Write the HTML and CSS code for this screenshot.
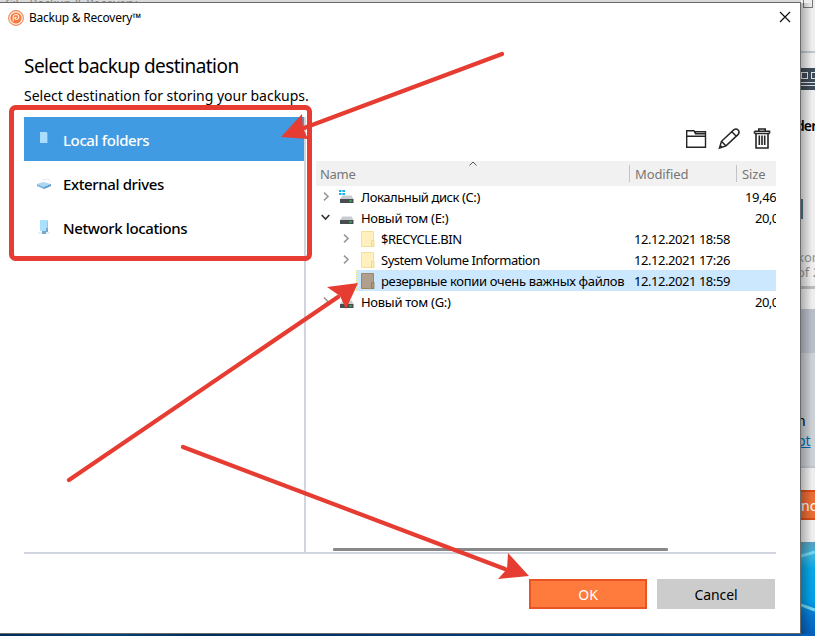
FILE: index.html
```
<!DOCTYPE html>
<html lang="en">
<head>
<meta charset="utf-8">
<title>Backup &amp; Recovery</title>
<link rel="stylesheet" href="styles.css">
</head>
<body>
<div class="desktop">
  <div class="owner-title">C:\ &nbsp; Backup &amp; Recovery</div>
  <aside class="owner">
    <div class="owner-caption"><i class="maximize"></i></div>
    <div class="owner-head">
      <div class="owner-banner"><i></i><i></i></div>
      <div class="owner-heading">der</div>
      <div class="owner-tab"></div>
      <div class="owner-note">kom<br>of 2</div>
    </div>
    <div class="owner-band"></div>
    <div class="owner-body">n<br><a>pt</a></div>
    <div class="owner-foot"><div class="owner-button">nc</div></div>
    <svg class="wallpaper" viewBox="0 0 14 94" preserveAspectRatio="none">
      <defs><linearGradient id="sky" x2="0" y2="1"><stop offset="0" stop-color="#579fbd"/><stop offset=".15" stop-color="#38b4de"/><stop offset=".28" stop-color="#08a7e7"/><stop offset=".62" stop-color="#02a0e8"/><stop offset=".78" stop-color="#0876d0"/><stop offset="1" stop-color="#0560bd"/></linearGradient></defs>
      <rect width="14" height="94" fill="url(#sky)"/>
      <path d="M0 14 14 10M0 63 14 68" stroke="#73d5ef" stroke-width="3"/>
    </svg>
  </aside>
  <div class="shade"></div>
  <div class="taskline"></div>

  <main class="dialog">
    <header class="titlebar">
      <svg class="logo" viewBox="0 0 16 16"><circle cx="8" cy="8" r="7.4" fill="#fff3ea" stroke="#ee8a58" stroke-width="1.1"/><circle cx="8" cy="8" r="5.600" fill="#f47b3d"/><path d="M5.200 11.500V7.200Q5.400 4.500 8 4.500q2.700.1 2.800 2.500Q10.700 9.400 8 9.500L6.800 8.200 8.400 7" fill="none" stroke="#ffe8d9" stroke-width="1.200"/></svg>
      <span class="app-name">Backup &amp; Recovery™</span>
      <svg class="close" viewBox="0 0 12 12"><path d="M1 1 11 11M11 1 1 11" stroke="#111" stroke-width="1.2"/></svg>
    </header>
    <section class="intro">
      <h1>Select backup destination</h1>
      <p>Select destination for storing your backups.</p>
    </section>
    <div class="content">
      <nav class="places">
        <div class="place active"><svg viewBox="0 0 16 16"><path d="M4 2h7v11H4z" fill="#aadcfd"/><path d="M11 3h1v10h-1z" fill="#69b5ec"/></svg><span>Local folders</span></div>
        <div class="place"><svg class="low" viewBox="0 0 16 16"><path d="M1 8 7 6l8 2-7 3z" fill="#add8f2"/><path d="m1 8 7 3v2L1 10z" fill="#78b3dc"/><path d="m8 11 7-3v2l-7 3z" fill="#5798cb"/><path d="M6 3.500h6q3 0 2 3" fill="none" stroke="#e4e9ed" stroke-width=".8"/></svg><span>External drives</span></div>
        <div class="place"><svg class="low" viewBox="0 0 16 16"><path d="M4 0h8v11H4z" fill="#ace0ff"/><path d="M11 1h1v8h-1z" fill="#91cbee"/><path d="M2 13h12" stroke="#d5dfe6"/><path d="M6 11h4v3H6zM10 8h2v4h-2z" fill="#76a9ca"/></svg><span>Network locations</span></div>
      </nav>
      <section class="browser">
        <div class="toolbar">
          <svg class="tool" viewBox="0 0 24 24"><path d="M2.700 20.300V3.700h7.300l1.500 3H21.500v13.600zM2.700 9.200h18.800M11.500 6.700V4.700h10v3" fill="none" stroke="#252525" stroke-width="1.4"/></svg>
          <svg class="tool" viewBox="0 0 24 24"><path d="m2.5 21 2-6.7L16.7 2.9q2.5-1.8 4.4.2t.1 4.3L9 18.9zM4.5 14.3l4.5 4.6M14.8 4.7l4.5 4.5M2.5 21l2-2.3" fill="none" stroke="#252525" stroke-width="1.5"/></svg>
          <svg class="tool" viewBox="0 0 24 24"><path d="M4.5 6.5h15M4.5 4.3h15v2.2M4.5 6.5V4.3M8.8 4V2h6.4v2M6 7v14h12V7M9.3 8.5v9.5M12 8.5v9.5M14.7 8.5v9.5" fill="none" stroke="#252525" stroke-width="1.6"/></svg>
        </div>
        <div class="columns">
          <span class="col-name">Name<svg class="sort" viewBox="0 0 8 5"><path d="M.5 4.5 4 1l3.5 3.5" fill="none" stroke="#555"/></svg></span>
          <span class="col-date">Modified</span><span class="col-size">Size</span>
        </div>
        <div class="row"><svg class="chev" viewBox="0 0 9 9"><path d="m3 .7 4 3.8-4 3.8" /></svg><svg class="drive" viewBox="0 0 16 16"><use href="#disk"/><path d="M0 1h2.500v2H0zM3.300 1H6v2H3.300zM0 4h2.500v2H0zM3.300 4H6v2H3.300z" fill="#10b4ed"/></svg><span class="name n-c">Локальный диск (C:)</span><span class="date"></span><span class="size wide">19,46</span></div>
        <div class="row"><svg class="chev open" viewBox="0 0 9 9"><path d="M.7 2 4.500 6 8.300 2"/></svg><svg class="drive" viewBox="0 0 16 16"><g id="disk"><path d="M3.500 6.500h9L14.500 10H1z" fill="#c9cccf"/><path d="M1 10h13.500v4H1z" fill="#4a4d50"/><path d="M10.500 12h2" stroke="#35e560" stroke-width="1.300"/></g></svg><span class="name n-e">Новый том (E:)</span><span class="date"></span><span class="size">20,0</span></div>
        <div class="row child"><svg class="chev" viewBox="0 0 9 9"><path d="m3 .7 4 3.8-4 3.8" /></svg><svg class="folder" viewBox="0 0 14 16"><use href="#folder"/></svg><span class="name n-r">$RECYCLE.BIN</span><span class="date">12.12.2021 18:58</span><span class="size"></span></div>
        <div class="row child"><svg class="chev" viewBox="0 0 9 9"><path d="m3 .7 4 3.8-4 3.8" /></svg><svg class="folder" viewBox="0 0 14 16"><g id="folder"><path d="M.5.500h12v15H.500z" fill="#fff0bd" stroke="#f3dfa2"/><path d="M10.500 9.500h2.500v6h-2.500z" fill="#ffedaf" stroke="#ecd58c" stroke-width=".8"/></g></svg><span class="name n-s">System Volume Information</span><span class="date">12.12.2021 17:26</span><span class="size"></span></div>
        <div class="row child selected"><svg class="folder" viewBox="0 0 14 16"><path d="M.5.500h12v15H.500z" fill="#b19f8d" stroke="#a28660"/><path d="M10.500 9.500h2.500v6h-2.500z" fill="#b09a7d" stroke="#927343" stroke-width=".8"/></svg><span class="name n-b">резервные копии очень важных файлов</span><span class="date">12.12.2021 18:59</span><span class="size"></span></div>
        <div class="row"><svg class="chev" viewBox="0 0 9 9"><path d="m3 .7 4 3.8-4 3.8" /></svg><svg class="drive" viewBox="0 0 16 16"><use href="#disk"/></svg><span class="name n-e">Новый том (G:)</span><span class="date"></span><span class="size">20,0</span></div>
        <div class="scroll"></div>
      </section>
    </div>
    <footer class="actions"><button class="ok">OK</button><button class="cancel">Cancel</button></footer>
  </main>

  <svg class="annotations" viewBox="0 0 815 636">
    <rect x="11.500" y="107.500" width="298" height="151" rx="4"/>
    <path d="M502 54 304 128M69 480 338 297M183 447 505 569"/>
    <path class="head" d="M281 137 302 114 303 128 308 139ZM358 283 346 309 340 296 327 287ZM529 576 498 579 507 569 508 553Z"/>
  </svg>
</div>
</body>
</html>
```
FILE: styles.css
```
* { box-sizing: border-box; }
body { margin: 0; font-family: "Noto Sans", "Open Sans", sans-serif; color: #000; }
.desktop { position: relative; width: 815px; height: 636px; overflow: hidden; background: #f1f1f1; }
.owner-title { height: 8px; padding-left: 5px; background: #d9d9d9; color: #888; font-size: 12px; line-height: 8px; white-space: pre; overflow: hidden; }
.owner { position: absolute; left: 801px; top: 0; width: 14px; height: 636px; display: flex; flex-direction: column; overflow: hidden; white-space: nowrap; background: #eee; }
.owner-caption { flex: 0 0 51px; padding-left: 2px; }
.maximize { display: block; width: 10px; height: 8px; border: 1px solid #777; border-top: 0; }
.owner-head { flex: 0 0 258px; border-top: 2px solid #bec5d0; }
.owner-banner { display: flex; gap: 3px; height: 22px; margin-top: 15px; background: linear-gradient(transparent 14px, #dce1e6 14px 15px, transparent 15px 17px, #dce1e6 17px 18px, transparent 18px), #3d4a58; }
.owner-banner i { flex: 0 0 7px; height: 7px; margin-top: 4px; border: 1px solid #dce1e6; }
.owner-heading { margin-left: -5px; height: 109px; padding-top: 24px; font-size: 14px; font-weight: 600; line-height: 23px; letter-spacing: -.9px; }
.owner-tab { width: 2px; height: 20px; background: #487590; }
.owner-note { height: 70px; margin-left: -4px; padding-top: 31px; color: #929292; font-size: 13px; line-height: 15px; border-bottom: 3px solid #bbb; }
.owner-band { flex: 0 0 44px; background: #b9bfc9; }
.owner-body { flex: 0 0 115px; margin-left: -4px; padding-top: 58px; background: #ccd1d6; border-bottom: 2px solid #bfc5ce; font-size: 14px; line-height: 20px; }
.owner-body a { color: #006dbc; text-decoration: underline; }
.owner-foot { flex: 0 0 74px; padding-top: 22px; }
.owner-button { height: 30px; background: #eb6c34; border: solid #d84d17; border-width: 2px 0; color: #fff; font-size: 14px; line-height: 27px; }
.wallpaper { flex: 0 0 94px; width: 14px; }
.shade { position: absolute; left: 801px; top: 3px; width: 11px; height: 631px; background: linear-gradient(90deg, #0004, #0000); }
.taskline { position: absolute; left: 0; bottom: 0; width: 801px; height: 3px; background: linear-gradient(90deg, #002b5c, #004477 13%, #002d5e 25%, #003a76 60%, #0754a0); }
.dialog { position: absolute; left: 0; top: 2px; width: 801px; height: 632px; display: flex; flex-direction: column; background: #fff; border: solid #6b6b6b; border-width: 1px 1px 1px 0; }
.titlebar { display: flex; align-items: center; height: 30px; padding: 0 9px 0 8px; font-size: 12px; }
.logo { width: 16px; height: 16px; margin-top: -1px; }
.app-name { margin-left: 5px; line-height: 20px; letter-spacing: -.25px; }
.close { width: 12px; height: 12px; margin: -2px 0 0 auto; }
.intro { height: 84px; padding: 20px 24px 0; }
h1 { margin: 0; font-size: 19px; line-height: 26px; font-weight: 400; letter-spacing: -.55px; }
p { margin: 7px 0 0; font-size: 14px; line-height: 20px; white-space: nowrap; letter-spacing: -.02px; }
.content { display: flex; height: 437px; margin: 0 24px; border-bottom: 2px solid #d1d5dd; }
.places { flex: 0 0 282px; border-right: 2px solid #d1d5dd; }
.place { display: flex; align-items: center; height: 44px; padding: 2px 12px 0; font-size: 15px; font-weight: 500; line-height: 24px; letter-spacing: -.39px; }
.place svg { width: 16px; height: 16px; margin: -5px 11px 0 0; }
.place svg.low { margin-top: -1px; }
.active { background: #419be3; color: #fff; }
.browser { flex: 0 0 460px; margin-left: 10px; overflow: hidden; }
.toolbar { display: flex; justify-content: flex-end; align-items: center; gap: 9px; height: 44px; padding-right: 2px; }
.tool { width: 24px; height: 24px; }
.columns { display: flex; height: 25px; background: #f1f1f1; color: #777; font-size: 13px; line-height: 26px; }
.col-name { position: relative; width: 313px; padding-left: 4px; letter-spacing: -.3px; }
.sort { position: absolute; left: 153px; top: 0; width: 8px; height: 5px; }
.col-date, .col-size { height: 17px; margin-top: 4px; border-left: 1px solid #c3c3c3; padding-left: 5px; line-height: 18px; letter-spacing: -.1px; }
.col-date { width: 107px; }
.row { display: flex; align-items: center; height: 21px; padding-left: 5px; font-size: 13px; line-height: 20px; white-space: nowrap; }
.child { padding-left: 25px; }
.chev { flex: none; width: 9px; height: 9px; fill: none; stroke: #999; stroke-width: 1.6; }
.open { stroke: #333; }
.drive { flex: none; width: 16px; height: 16px; margin-left: 9px; margin-right: 6px; }
.folder { flex: none; width: 14px; height: 16px; margin-left: 11px; margin-right: 6px; }
.name { flex: 1 1 0; min-width: 0; }
.n-c { letter-spacing: -.42px; }
.n-e { letter-spacing: -.3px; }
.n-r { letter-spacing: -.5px; }
.n-s { letter-spacing: -.48px; }
.n-b { letter-spacing: -.32px; }
.date { flex: 0 0 107px; letter-spacing: -.45px; }
.size { flex: 0 0 35px; padding-left: 14px; letter-spacing: -.5px; overflow: hidden; }
.size.wide { padding-left: 4px; letter-spacing: -.4px; }
.selected { margin-left: 40px; padding-left: 5px; background: #cce8ff; outline: 1px dotted #f4eb70; outline-offset: -1px; }
.selected .folder { margin-left: 0; }
.scroll { width: 335px; height: 3px; margin: 236px 0 0 17px; background: #888; border-radius: 1px; }
.actions { display: flex; justify-content: flex-end; gap: 10px; padding: 25px 25px 0; }
button { width: 118px; height: 30px; padding: 0; border: 0; font: 14px/29px "Noto Sans", sans-serif; letter-spacing: -.1px; }
.ok { background: #ff7a3d; border: 2px solid #ea5424; line-height: 26px; padding-top: 1px; color: #fff; }
.cancel { background: #ccc; color: #000; }
.annotations { position: absolute; inset: 0; width: 815px; height: 636px; fill: none; stroke: #e63c31; stroke-width: 4.2; stroke-linecap: round; pointer-events: none; }
.annotations rect { stroke-width: 5; }
.annotations .head { fill: #e63c31; stroke: none; }
```
